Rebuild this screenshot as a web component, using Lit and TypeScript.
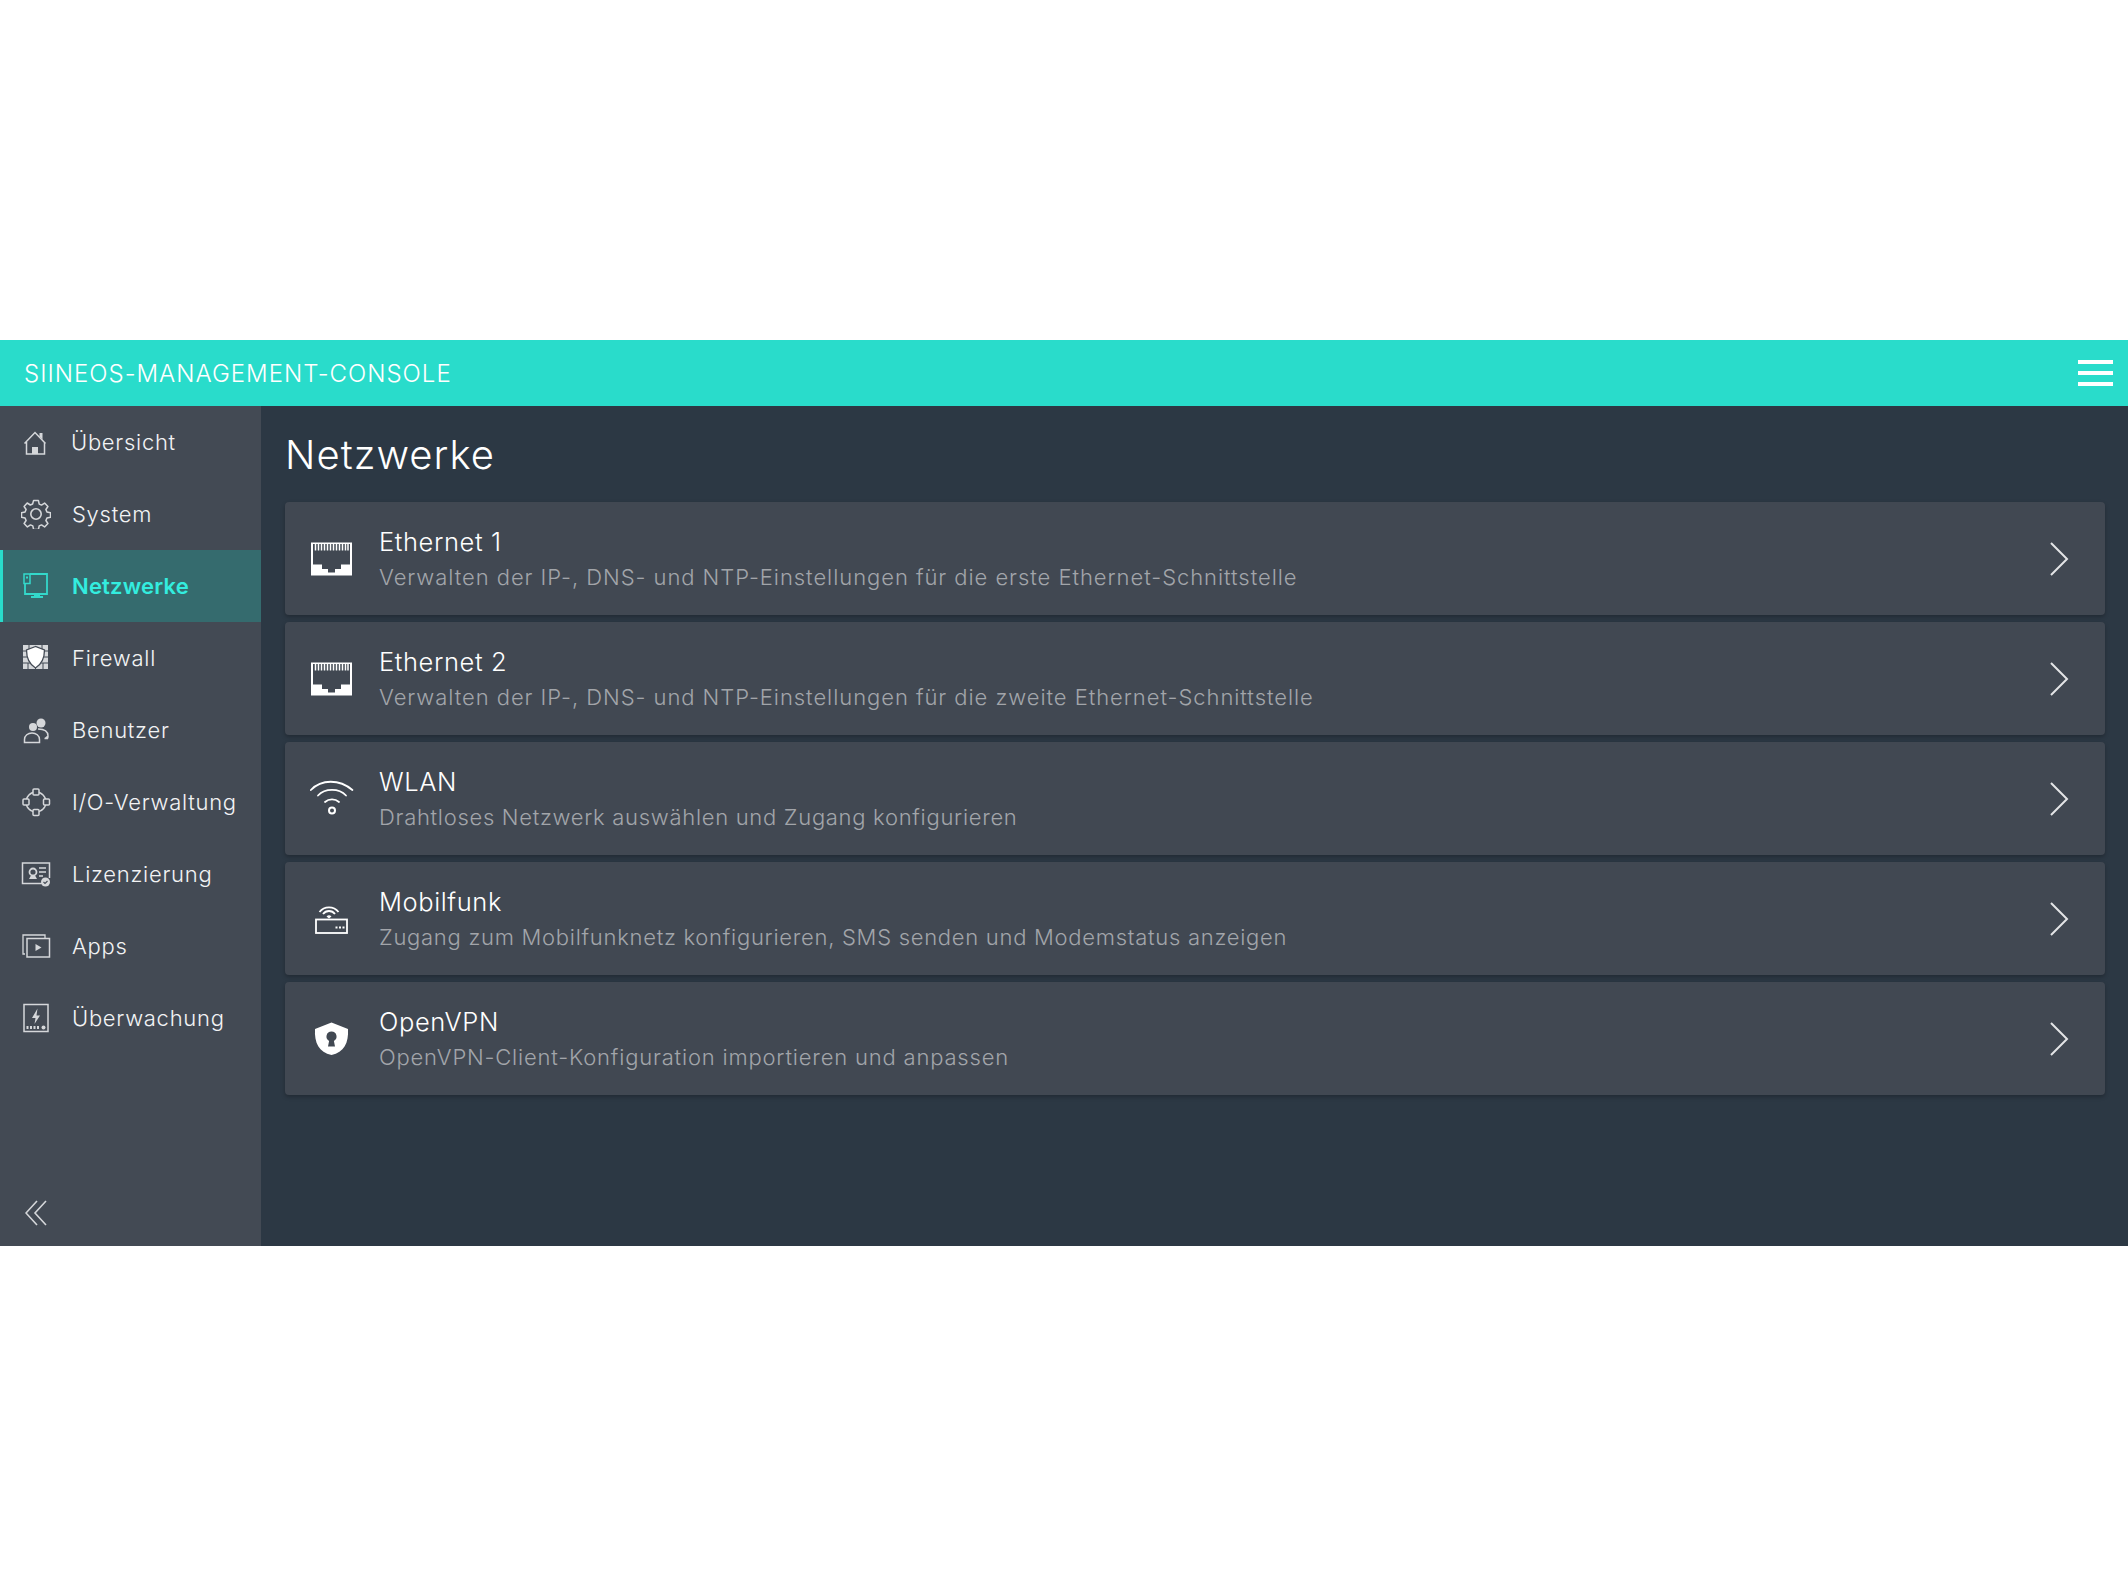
import { LitElement, html, css, svg } from "lit";
import { customElement } from "lit/decorators.js";

const navIcons: Record<string, unknown> = {
  home: svg`<path d="M3.500 16.500 14 5.500 24.500 16.500M5.500 15v12H23.500V15" fill="none" stroke="currentColor" stroke-width="1.500"/><path d="M18.500 6h3v6.500l-3-3zM11 20h6v7h-6z" fill="currentColor"/>`,
  gear: svg`<circle cx="15" cy="15" r="5.2" fill="none" stroke="currentColor" stroke-width="1.6"/><path d="M12.600 1.500h4.800l.8 3.600 2.300 1 3.100-2 3.300 3.400-2 3 1 2.400 3.600.8v4.600l-3.600.8-1 2.400 2 3-3.300 3.400-3.100-2-2.300 1-.8 3.600h-4.800l-.8-3.600-2.300-1-3.100 2-3.300-3.400 2-3-1-2.400-3.600-.8v-4.600l3.600-.8 1-2.400-2-3L6.200 4l3.100 2 2.300-1z" fill="none" stroke="currentColor" stroke-width="1.500" stroke-linejoin="round"/>`,
  net: svg`<path d="M9 3h17v20H9M4 12.500V23h5" fill="none" stroke="currentColor" stroke-width="1.800"/><rect x="3" y="3" width="6" height="9.500" fill="none" stroke="currentColor" stroke-width="1.500"/><rect x="5" y="5.500" width="2" height="2" fill="currentColor"/><path d="M13 23h6v2h3v2H10v-2h3z" fill="currentColor"/>`,
  fire: svg`<rect x="2" y="2" width="25" height="24" fill="currentColor"/><path d="M2 8h5M2 14h6M2 20h7M21 8h6M21 14h6M19 20h8M8 2v5M21 2v5M7 20v6M14.500 24v2M22 20v6" stroke="#434a54" stroke-width="1"/><path d="M14.500 3.500 5.500 7c0 9 2.500 14 9 18 6.500-4 9-9 9-18z" fill="#fff" stroke="#434a54" stroke-width="1.300"/>`,
  users: svg`<circle cx="12" cy="12" r="4" fill="currentColor"/><circle cx="20" cy="8" r="4.500" fill="currentColor"/><path d="M3.500 27.500v-3c0-4 3.500-6.500 7.500-6.500s7.500 2.500 7.500 6.500v3zM17 14c5 0 10 1 10 7 0 1.500-.5 2.500-.5 2.500h-3M27 21l-3 2.500" fill="none" stroke="currentColor" stroke-width="1.500"/>`,
  io: svg`<circle cx="15" cy="15" r="10" fill="none" stroke="currentColor" stroke-width="1.500"/><rect x="12" y="2" width="6" height="6" rx="1" fill="#434a54" stroke="currentColor" stroke-width="1.500"/><rect x="12" y="22.500" width="6" height="6" rx="1" fill="#434a54" stroke="currentColor" stroke-width="1.500"/><rect x="2" y="12" width="6" height="6" rx="1" fill="#434a54" stroke="currentColor" stroke-width="1.500"/><rect x="22.500" y="12" width="6" height="6" rx="1" fill="#434a54" stroke="currentColor" stroke-width="1.500"/>`,
  lic: svg`<path d="M21 24.500H1.500V4h27v15" fill="none" stroke="currentColor" stroke-width="1.500"/><circle cx="12" cy="13" r="3.500" fill="none" stroke="currentColor" stroke-width="1.800"/><path d="M8 20l2-3.500h4l2 3.500z" fill="currentColor"/><path d="M18 9h7M18 13h7M18 17h4" stroke="currentColor" stroke-width="1.500"/><circle cx="24.500" cy="23" r="4.500" fill="currentColor"/><path d="m22.500 23 1.500 1.500 2.500-2.500" fill="none" stroke="#434a54" stroke-width="1.100"/>`,
  apps: svg`<path d="M4 23H2V4h22v3" fill="none" stroke="currentColor" stroke-width="1.300"/><path d="M6 7.500h22.500V26H6z" fill="none" stroke="currentColor" stroke-width="1.500"/><path d="M14.500 13v7l6-3.500z" fill="currentColor"/>`,
  mon: svg`<rect x="3" y="1.500" width="24" height="27" fill="none" stroke="currentColor" stroke-width="1.500"/><path d="M16.500 5.500 11 15h3.500l-1 6 5.500-8.500h-3.500z" fill="currentColor"/><path d="M5.500 23h2v3h-2zM9 23h2v3H9zM12.500 23h2v3h-2zM16 23h2v3h-2z" fill="currentColor"/><circle cx="22.500" cy="24.500" r="2" fill="currentColor"/>`,
};

const rj45 = svg`<path fill-rule="evenodd" d="M0 0h41v33H0zM2 1.500V22h9v4.500h6V30h7v-3.500h6V22h9V1.500z" fill="currentColor"/><path d="M4.500 1.500v6.500M7.500 1.500v6.500M10.500 1.500v6.500M13.500 1.500v6.500M16.500 1.500v6.500M19.500 1.500v6.500M22.500 1.500v6.500M25.500 1.500v6.500M28.500 1.500v6.500M31.500 1.500v6.500M34.500 1.500v6.500M37 1.500v6.500" stroke="currentColor" stroke-width="1.500"/>`;

const cardIcons: Record<string, unknown> = {
  rj45,
  wifi: svg`<g transform="translate(-1 -7)"><path d="M.9 14.500C11.400 3.500 29.400 3.500 42.400 14.500" fill="none" stroke="currentColor" stroke-width="1.800" stroke-linecap="round"/><path d="M8 20C15 12.500 29 12.500 36 20" fill="none" stroke="currentColor" stroke-width="1.800" stroke-linecap="round"/><path d="M15 26.500C19 23 25 23 29 26.500" fill="none" stroke="currentColor" stroke-width="1.800" stroke-linecap="round"/><circle cx="22" cy="35" r="3" fill="none" stroke="currentColor" stroke-width="2"/></g>`,
  modem: svg`<rect x="5" y="17" width="31" height="13.500" fill="none" stroke="currentColor" stroke-width="1.800"/><path d="M24.500 25h2M28 25h2M31.500 25h2" stroke="currentColor" stroke-width="1.800"/><path d="M12 11.500a7.500 7.500 0 0 1 12 0M8.500 9.500a12 12 0 0 1 19 0" fill="none" stroke="currentColor" stroke-width="1.800"/><path d="M15.500 14a3.500 3.500 0 0 1 5 0l-2.500 2z" fill="currentColor"/>`,
  shield: svg`<path fill-rule="evenodd" d="M20.500 0 37 6.500c.8 14-4 23.500-16.500 26C8 30 3.200 20.500 4 6.500zM20.500 9a5 5 0 0 0-2.400 9.400L17 24h7l-1.100-5.600A5 5 0 0 0 20.500 9z" fill="currentColor"/>`,
};

interface Nav { label: string; icon: string; active?: boolean; tight?: boolean }
const nav: Nav[] = [
  { label: "Übersicht", icon: "home", tight: true },
  { label: "System", icon: "gear" },
  { label: "Netzwerke", icon: "net", active: true },
  { label: "Firewall", icon: "fire" },
  { label: "Benutzer", icon: "users" },
  { label: "I/O-Verwaltung", icon: "io" },
  { label: "Lizenzierung", icon: "lic" },
  { label: "Apps", icon: "apps" },
  { label: "Überwachung", icon: "mon" },
];
const cards = [
  { t: "Ethernet 1", d: "Verwalten der IP-, DNS- und NTP-Einstellungen für die erste Ethernet-Schnittstelle", i: "rj45", ls: 0.94 },
  { t: "Ethernet 2", d: "Verwalten der IP-, DNS- und NTP-Einstellungen für die zweite Ethernet-Schnittstelle", i: "rj45", ls: 0.94 },
  { t: "WLAN", d: "Drahtloses Netzwerk auswählen und Zugang konfigurieren", i: "wifi", ls: 0.7 },
  { t: "Mobilfunk", d: "Zugang zum Mobilfunknetz konfigurieren, SMS senden und Modemstatus anzeigen", i: "modem", ls: 0.72 },
  { t: "OpenVPN", d: "OpenVPN-Client-Konfiguration importieren und anpassen", i: "shield", ls: 0.81 },
];

@customElement("app-root")
export class AppRoot extends LitElement {
  static styles = css`
    :host { display: block; height: 1586px; background: #fff; padding-top: 340px; box-sizing: border-box; font-family: Inter, "Noto Sans", sans-serif; }
    .bar { height: 66px; background: #29dccb; display: flex; align-items: center; justify-content: space-between; padding: 0 15px 0 24px; color: #fff; }
    .brand { font-size: 24px; font-weight: 300; letter-spacing: 1px; }
    .burger { display: flex; flex-direction: column; gap: 7px; width: 35px; }
    .burger i { display: block; height: 4px; background: #fff; }
    .shell { display: flex; height: 840px; }
    .side { width: 261px; background: #434a54; display: flex; flex-direction: column; flex: none; }
    .row { height: 72px; flex: none; display: flex; align-items: center; padding-left: 21px; gap: 21px; color: #f2f3f4; font-size: 22px; font-weight: 350; letter-spacing: .72px; box-sizing: border-box; }
    .row svg { width: 30px; height: 30px; flex: none; color: #d5d7da; }
    .row.tight span { margin-left: -1px; }
    .row.active { background: #356b6e; color: #33eddf; border-left: 3px solid #29dccb; padding-left: 18px; font-weight: 600; letter-spacing: .2px; }
    .row.active svg { color: #33d9cb; }
    .collapse { margin-top: auto; padding: 0 0 20px 25px; color: #d5d7da; line-height: 0; }
    .collapse svg { width: 22px; height: 26px; }
    .main { flex: 1; background: #2c3844; padding: 0 23px 0 24px; }
    h1 { margin: 0; height: 96px; display: flex; align-items: center; font-size: 40px; font-weight: 300; color: #fff; letter-spacing: 1.05px; box-sizing: border-box; }
    .cards { display: flex; flex-direction: column; gap: 7px; }
    .card { height: 113px; background: #414852; border-radius: 4px; box-shadow: 0 2px 4px rgba(0,0,0,.25); display: flex; align-items: center; padding: 0 36px 0 25px; box-sizing: border-box; }
    .ic { width: 44px; height: 44px; flex: none; color: #fff; }
    .txt { flex: 1; margin-left: 25px; display: flex; flex-direction: column; gap: 4px; }
    .t { font-size: 25.5px; font-weight: 350; line-height: 32px; color: #fff; letter-spacing: .6px; }
    .d { font-size: 22px; font-weight: 350; line-height: 30px; color: #a2a5aa; }
    .chev { width: 20px; height: 34px; color: #e4e5e7; flex: none; }
  `;
  render() {
    return html`
      <div class="bar">
        <div class="brand">SIINEOS-MANAGEMENT-CONSOLE</div>
        <div class="burger"><i></i><i></i><i></i></div>
      </div>
      <div class="shell">
        <nav class="side">
          ${nav.map((n) => html`<div class="row ${n.active ? "active" : ""} ${n.tight ? "tight" : ""}"><svg viewBox="0 0 30 30">${navIcons[n.icon]}</svg><span>${n.label}</span></div>`)}
          <div class="collapse"><svg viewBox="0 0 22 26"><path d="M12 1 1 13l11 12M21 1 10 13l11 12" fill="none" stroke="currentColor" stroke-width="1.600"/></svg></div>
        </nav>
        <main class="main">
          <h1>Netzwerke</h1>
          <div class="cards">
            ${cards.map((c) => html`<div class="card">
              <svg class="ic" viewBox="0 0 44 44"><g transform="translate(1 5.500)">${cardIcons[c.i]}</g></svg>
              <div class="txt"><div class="t">${c.t}</div><div class="d" style="letter-spacing:${c.ls}px">${c.d}</div></div>
              <svg class="chev" viewBox="0 0 20 34"><path d="M2 1l16 16L2 33" fill="none" stroke="currentColor" stroke-width="2"/></svg>
            </div>`)}
          </div>
        </main>
      </div>`;
  }
}
